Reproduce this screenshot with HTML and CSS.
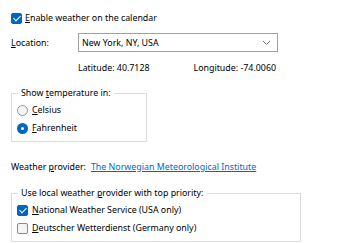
FILE: index.html
```html
<!DOCTYPE html>
<html lang="en">
<head>
    <meta charset="UTF-8">
    <title>Weather settings</title>
    <link rel="stylesheet" href="styles.css">
</head>
<body>
    <div class="page">
        <label class="option top-check">
            <span class="box checked"></span>
            <span><u>E</u>nable weather on the calendar</span>
        </label>

        <div class="location-row">
            <span class="field-label"><u>L</u>ocation:</span>
            <div class="combo">
                <span>New York, NY, USA</span>
                <svg class="chevron" width="9" height="6" viewBox="0 0 9 6">
                    <path d="M1 1 L4.5 4.5 L8 1" fill="none" stroke="#707070" stroke-width="1"/>
                </svg>
            </div>
        </div>

        <div class="coords">
            <span>Latitude: 40.7128</span>
            <span>Longitude: -74.0060</span>
        </div>

        <fieldset class="group temp-group">
            <legend>Show <u>t</u>emperature in:</legend>
            <label class="option">
                <span class="radio"></span>
                <span><u>C</u>elsius</span>
            </label>
            <label class="option">
                <span class="radio selected"></span>
                <span><u>F</u>ahrenheit</span>
            </label>
        </fieldset>

        <div class="provider-row">
            <span>Weather <u>p</u>rovider:</span>
            <a href="#" class="link">The Norwegian Meteorological Institute</a>
        </div>

        <fieldset class="group local-group">
            <legend>Use local weather <u>p</u>rovider with top priority:</legend>
            <label class="option">
                <span class="box checked"></span>
                <span><u>N</u>ational Weather Service (USA only)</span>
            </label>
            <label class="option">
                <span class="box"></span>
                <span><u>D</u>eutscher Wetterdienst (Germany only)</span>
            </label>
        </fieldset>
    </div>
</body>
</html>
```

FILE: styles.css
```css
:root {
    --accent: #0067c0;
    --group-border: #dcdcdc;
    --text: #000;
}

body {
    margin: 0;
    background: #fff;
    color: var(--text);
    font-family: 'Noto Sans', 'Open Sans', sans-serif;
    font-size: 8.85px;
    line-height: 12px;
}

u {
    text-decoration-thickness: 1px;
    text-underline-offset: 1px;
}

.page {
    padding: 9px 0 0 11px;
}

.option {
    display: flex;
    align-items: center;
    gap: 4px;
    height: 18px;
    white-space: nowrap;
}

.box {
    width: 9px;
    height: 9px;
    border: 1px solid #8a8a8a;
    border-radius: 2px;
    background: #f4f4f4;
    position: relative;
    flex: none;
}

.box.checked {
    background: var(--accent);
    border-color: var(--accent);
}

.box.checked::after {
    content: '';
    position: absolute;
    left: 2.5px;
    top: 0;
    width: 3px;
    height: 6px;
    border: solid #fff;
    border-width: 0 1.5px 1.5px 0;
    transform: rotate(45deg);
}

.radio {
    width: 9px;
    height: 9px;
    border: 1px solid #999;
    border-radius: 50%;
    background: #f4f4f4;
    flex: none;
}

.radio.selected {
    width: 3px;
    height: 3px;
    border: 4px solid var(--accent);
    background: #fff;
}

.top-check {
    gap: 3px;
}

.location-row {
    display: flex;
    align-items: center;
    margin-top: 6px;
}

.field-label {
    width: 67px;
}

.combo {
    display: flex;
    align-items: center;
    justify-content: space-between;
    width: 189px;
    height: 17px;
    padding: 0 6px 0 3px;
    border: 1px solid #a0a0a0;
}

.coords {
    display: flex;
    justify-content: space-between;
    width: 198px;
    margin: 10px 0 0 67px;
}

.group {
    margin: 0;
    padding: 2px 4px 4px 5px;
    border: 1px solid var(--group-border);
}

.group legend {
    padding: 0 3px;
    margin-left: 1px;
    white-space: nowrap;
}

.temp-group {
    width: 125px;
    margin-top: 13px;
}

.provider-row {
    display: flex;
    gap: 5px;
    margin-top: 19px;
}

.link {
    color: #0066cc;
}

.local-group {
    width: 279px;
    margin-top: 14px;
}
```
